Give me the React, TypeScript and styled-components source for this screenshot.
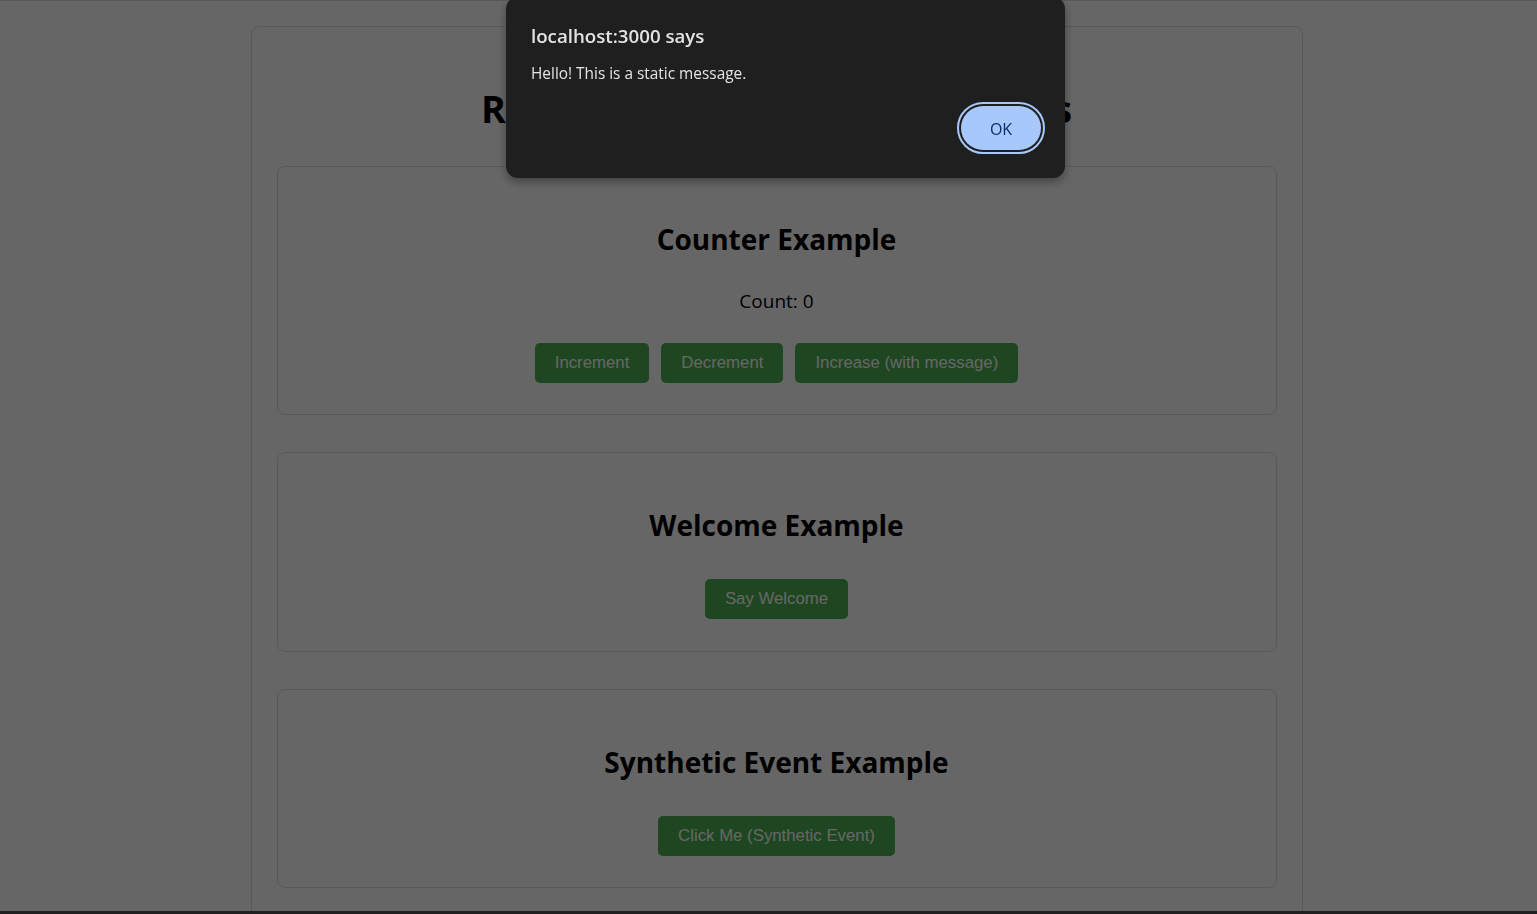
import React from "react";
import styled, { createGlobalStyle } from "styled-components";

const GlobalStyle = createGlobalStyle`
  html, body {
    margin: 0;
    padding: 0;
    overflow: hidden;
    background: #ffffff;
  }
  body {
    font-family: "Open Sans", "Noto Sans", "DejaVu Sans", sans-serif;
    color: #000000;
  }
  * { box-sizing: border-box; }
`;

const Page = styled.div`
  width: 100%;
  padding: 0 0 40px 16px;
`;

const Container = styled.div`
  width: 1052px;
  margin: 26px auto 0;
  padding: 25px;
  border: 1px solid #dddddd;
  border-radius: 8px;
  background: #ffffff;
`;

const Title = styled.h1`
  margin: 31px 0 31px;
  font-size: 37.8px;
  line-height: 52px;
  font-weight: 700;
  text-align: center;
`;

const Card = styled.section<{ $bottom?: number }>`
  margin-bottom: 37px;
  padding: 53px 20px ${(p) => p.$bottom ?? 32}px;
  border: 1px solid #dddddd;
  border-radius: 8px;
  text-align: center;
`;

const CardTitle = styled.h2`
  margin: 0;
  font-size: 28px;
  line-height: 38px;
  font-weight: 700;
`;

const CountText = styled.p`
  margin: 30px 0 29px;
  font-size: 19px;
  line-height: 26px;
`;

const ButtonRow = styled.div<{ $top?: number }>`
  display: flex;
  justify-content: center;
  gap: 12px;
  margin-top: ${(p) => p.$top ?? 0}px;
`;

const ActionButton = styled.button`
  padding: 10px 20px;
  border: none;
  border-radius: 5px;
  background: #4caf50;
  color: #ffffff;
  font-family: "Liberation Sans", Arial, sans-serif;
  font-size: 16.8px;
  line-height: 20px;
  cursor: pointer;
`;

const Backdrop = styled.div`
  position: fixed;
  inset: 0;
  background: rgba(0, 0, 0, 0.6);
  border-top: 1px solid rgba(0, 0, 0, 0.14);
  border-bottom: 3px solid #1f1f1f;
  z-index: 10;
`;

const Dialog = styled.div`
  position: absolute;
  left: 506px;
  top: -4px;
  width: 559px;
  padding: 26px 24px 28px 25px;
  background: #1f1f1f;
  border-radius: 12px;
  box-shadow: 0 4px 10px rgba(0, 0, 0, 0.35);
  color: #e3e3e3;
  font-family: "Open Sans", "Noto Sans", sans-serif;
`;

const DialogTitle = styled.div`
  font-size: 18.7px;
  line-height: 26px;
  font-weight: 600;
`;

const DialogMessage = styled.div`
  margin-top: 14px;
  font-size: 15.4px;
  line-height: 22px;
`;

const DialogActions = styled.div`
  display: flex;
  justify-content: flex-end;
  margin-top: 21px;
`;

const OkButton = styled.button`
  width: 80px;
  height: 44px;
  padding: 2px 0 0;
  border: none;
  border-radius: 22px;
  background: #a8c7fa;
  color: #062e6f;
  font-family: "Open Sans", "Noto Sans", sans-serif;
  font-size: 16px;
  font-weight: 500;
  outline: 2px solid #a8c7fa;
  outline-offset: 2px;
  cursor: pointer;
`;

export default function App() {
  return (
    <>
      <GlobalStyle />
      <Page>
        <Container>
          <Title>React Event Handling Examples</Title>
          <Card $bottom={31}>
            <CardTitle>Counter Example</CardTitle>
            <CountText>Count: 0</CountText>
            <ButtonRow>
              <ActionButton>Increment</ActionButton>
              <ActionButton>Decrement</ActionButton>
              <ActionButton>Increase (with message)</ActionButton>
            </ButtonRow>
          </Card>
          <Card>
            <CardTitle>Welcome Example</CardTitle>
            <ButtonRow $top={35}>
              <ActionButton>Say Welcome</ActionButton>
            </ButtonRow>
          </Card>
          <Card $bottom={31}>
            <CardTitle>Synthetic Event Example</CardTitle>
            <ButtonRow $top={35}>
              <ActionButton>Click Me (Synthetic Event)</ActionButton>
            </ButtonRow>
          </Card>
        </Container>
      </Page>
      <Backdrop>
        <Dialog role="alertdialog">
          <DialogTitle>localhost:3000 says</DialogTitle>
          <DialogMessage>Hello! This is a static message.</DialogMessage>
          <DialogActions>
            <OkButton autoFocus>OK</OkButton>
          </DialogActions>
        </Dialog>
      </Backdrop>
    </>
  );
}
